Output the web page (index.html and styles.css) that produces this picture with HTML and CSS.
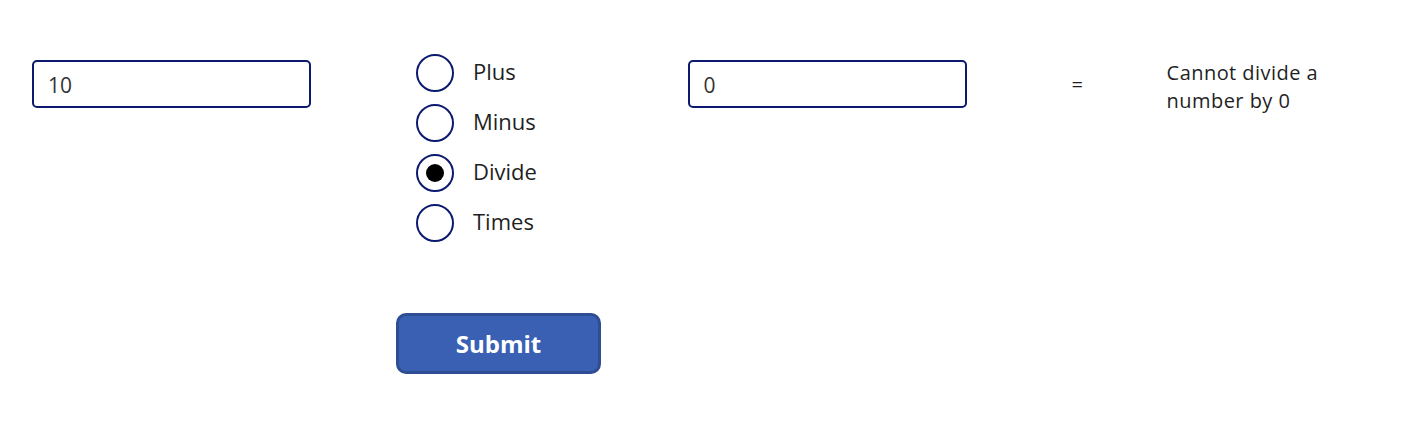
FILE: index.html
```html
<!DOCTYPE html>
<html>
<head>
<meta charset="utf-8">
<link rel="stylesheet" href="styles.css">
</head>
<body>
<div class="canvas">
  <div class="row">
    <div class="input input-a">10</div>
    <div class="middle">
      <div class="radios">
        <div class="radio"><span class="circle"></span><span class="label">Plus</span></div>
        <div class="radio"><span class="circle"></span><span class="label">Minus</span></div>
        <div class="radio"><span class="circle checked"></span><span class="label">Divide</span></div>
        <div class="radio"><span class="circle"></span><span class="label">Times</span></div>
      </div>
      <button class="submit">Submit</button>
    </div>
    <div class="input input-b">0</div>
    <div class="equals">=</div>
    <div class="result"><div class="line">Cannot divide a</div><div class="line">number by 0</div></div>
  </div>
</div>
</body>
</html>
```
FILE: styles.css
```css
html, body {
  margin: 0;
  padding: 0;
  background: #ffffff;
  font-family: "Open Sans", "Noto Sans", sans-serif;
  color: #1f1f1f;
}
.canvas {
  width: 1414px;
  height: 444px;
  padding: 60px 0 0 32px;
  box-sizing: border-box;
}
.row {
  display: flex;
  align-items: flex-start;
}
.input {
  box-sizing: border-box;
  width: 279px;
  height: 48px;
  border: 2px solid #0b1a6e;
  border-radius: 5px;
  padding: 0 0 0 14px;
  font-size: 21px;
  line-height: 46px;
  color: #333;
}
.middle {
  margin-left: 85px;
  width: 291.6px;
  display: flex;
  flex-direction: column;
  margin-top: -6px;
}
.radios {
  display: flex;
  flex-direction: column;
  gap: 12px;
  margin-left: 20px;
}
.radio {
  display: flex;
  align-items: center;
  height: 38px;
}
.circle {
  box-sizing: border-box;
  width: 38px;
  height: 38px;
  border: 2px solid #0b1a6e;
  border-radius: 50%;
  display: flex;
  align-items: center;
  justify-content: center;
}
.circle.checked::after {
  content: "";
  width: 18px;
  height: 18px;
  border-radius: 50%;
  background: #000;
}
.label {
  margin-left: 19px;
  font-size: 22px;
  color: #1f1f1f;
  margin-top: -4px;
}
.submit {
  margin-top: 71px;
  width: 205px;
  height: 61px;
  box-sizing: border-box;
  background: #3a60b4;
  border: 3px solid #2e4d93;
  border-radius: 10px;
  color: #fff;
  font-family: "Open Sans", "Noto Sans", sans-serif;
  font-weight: 700;
  font-size: 24px;
  padding: 0;
}
.input-b {
  width: 279px;
}
.equals {
  margin-left: 105px;
  font-size: 20px;
  line-height: 49px;
  width: 95px;
}
.result {
  color: #1f1f1f;
  margin-top: -1px;
}
.line {
  font-size: 20px;
  letter-spacing: 0.45px;
  line-height: 27.5px;
  height: 27.5px;
}
```
